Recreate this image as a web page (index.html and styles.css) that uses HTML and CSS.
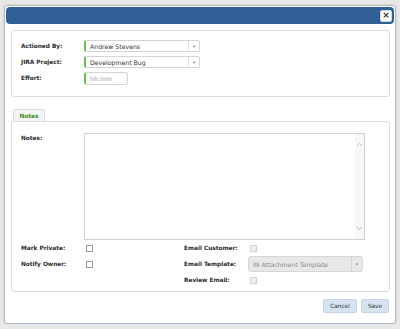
FILE: index.html
```html
<!DOCTYPE html>
<html lang="en">
<head>
    <meta charset="UTF-8">
    <meta name="viewport" content="width=device-width, initial-scale=1.0">
    <title>Action</title>
    <link rel="stylesheet" href="styles.css">
</head>
<body>
    <div class="dialog">
        <div class="titlebar">
            <button class="close">&times;</button>
        </div>

        <div class="panel top-panel">
            <div class="field-row">
                <label>Actioned By:</label>
                <div class="select required">
                    <span class="value">Andrew Stevens</span>
                    <span class="arrow">&#9662;</span>
                </div>
            </div>
            <div class="field-row">
                <label>JIRA Project:</label>
                <div class="select required">
                    <span class="value">Development Bug</span>
                    <span class="arrow">&#9662;</span>
                </div>
            </div>
            <div class="field-row">
                <label>Effort:</label>
                <div class="input required effort">
                    <span class="placeholder">hh:mm</span>
                </div>
            </div>
        </div>

        <div class="tabs">
            <div class="tab active">Notes</div>
        </div>
        <div class="panel tab-panel">
            <div class="notes-row">
                <label>Notes:</label>
                <div class="textarea">
                    <div class="text"></div>
                    <div class="scrollbar">
                        <svg width="7" height="5" viewBox="0 0 7 5"><path d="M1 4 L3.5 1.5 L6 4" fill="none" stroke="#bbb" stroke-width="1"/></svg>
                        <svg width="7" height="5" viewBox="0 0 7 5"><path d="M1 1 L3.5 3.5 L6 1" fill="none" stroke="#bbb" stroke-width="1"/></svg>
                    </div>
                </div>
            </div>
            <div class="options">
                <label>Mark Private:</label>
                <div class="cell"><span class="checkbox"></span></div>
                <label>Email Customer:</label>
                <div class="cell"><span class="checkbox disabled"></span></div>

                <label>Notify Owner:</label>
                <div class="cell"><span class="checkbox"></span></div>
                <label>Email Template:</label>
                <div class="cell">
                    <div class="select disabled wide">
                        <span class="value">IN Attachment Template</span>
                        <span class="arrow">&#9662;</span>
                    </div>
                </div>

                <span></span>
                <span></span>
                <label>Review Email:</label>
                <div class="cell"><span class="checkbox disabled"></span></div>
            </div>
        </div>

        <div class="actions">
            <button class="btn cancel">Cancel</button>
            <button class="btn save">Save</button>
        </div>
    </div>
</body>
</html>
```

FILE: styles.css
```css
body {
    margin: 0;
    padding: 0;
    background-color: #e9e9e9;
    font-family: "DejaVu Sans", Verdana, sans-serif;
    font-size: 6.2px;
    color: #333;
}
.dialog {
    margin: 5px 4px 0 4px;
    height: 315px;
    padding: 1px;
    background-color: #fff;
    border: 1px solid #a9b8c6;
    border-radius: 3px;
    box-shadow: 0 0 3px rgba(0, 0, 0, 0.15);
}
.titlebar {
    height: 17px;
    background-color: #2f5f95;
    border-radius: 4px;
    display: flex;
    justify-content: flex-end;
    align-items: center;
    padding-right: 2px;
}
.close {
    width: 12px;
    height: 12px;
    padding: 0;
    border: 1px solid #ccd6e0;
    border-radius: 2px;
    background-color: #fff;
    color: #333;
    font-family: "DejaVu Sans", sans-serif;
    font-weight: bold;
    font-size: 9px;
    line-height: 9px;
}
.panel {
    margin: 0 4px 0 5px;
    border: 1px solid #dcdcdc;
    border-radius: 3px;
    background-color: #fff;
}
.top-panel {
    margin-top: 6px;
    height: 47px;
    padding: 9px 9px 9px 9px;
    display: flex;
    flex-direction: column;
    gap: 4px;
}
label {
    font-weight: bold;
    font-size: 5.8px;
    color: #2a2a2a;
}
.field-row {
    display: flex;
    align-items: center;
    height: 12px;
}
.field-row label {
    width: 63px;
    flex-shrink: 0;
}
.select {
    display: flex;
    align-items: center;
    height: 12px;
    width: 116px;
    box-sizing: border-box;
    border: 1px solid #d4d4d4;
    border-radius: 2px;
    background-color: #fff;
}
.required {
    border-left: 2px solid #6cc04a;
}
.select .value {
    flex: 1;
    padding-left: 4px;
}
.select .arrow {
    width: 10px;
    height: 100%;
    border-left: 1px solid #e2e2e2;
    color: #999;
    font-size: 5px;
    display: flex;
    align-items: center;
    justify-content: center;
}
.input {
    height: 13px;
    box-sizing: border-box;
    border: 1px solid #d4d4d4;
    border-radius: 3px;
    display: flex;
    align-items: center;
    padding-left: 4px;
}
.required.input {
    border-left: 2px solid #6cc04a;
}
.effort {
    width: 44px;
}
.placeholder {
    color: #999;
}
.tabs {
    margin: 12px 0 0 7px;
    display: flex;
}
.tab {
    width: 32px;
    height: 12px;
    box-sizing: border-box;
    border: 1px solid #dcdcdc;
    border-bottom: none;
    border-radius: 2px 2px 0 0;
    background-color: #f4f4f4;
    color: #3c8d1c;
    font-weight: bold;
    font-size: 5.8px;
    display: flex;
    align-items: center;
    justify-content: center;
}
.tab-panel {
    height: 157px;
    padding: 11px 9px 1px 9px;
    border-radius: 0 3px 3px 3px;
}
.notes-row {
    display: flex;
    height: 107px;
}
.notes-row label {
    width: 63px;
    flex-shrink: 0;
    padding-top: 2px;
}
.textarea {
    width: 281px;
    box-sizing: border-box;
    border: 1px solid #d0d0d0;
    display: flex;
}
.textarea .text {
    flex: 1;
}
.scrollbar {
    width: 9px;
    background-color: #f7f7f7;
    display: flex;
    flex-direction: column;
    justify-content: space-between;
    align-items: center;
    padding: 8px 0 8px 0;
}
.options {
    display: grid;
    grid-template-columns: 63px 100px 64px 1fr;
    grid-auto-rows: 16px;
    align-items: center;
}
.cell {
    display: flex;
    align-items: center;
}
.checkbox {
    width: 5px;
    height: 5px;
    margin-left: 2px;
    border: 1px solid #999;
    background-color: #fff;
}
.checkbox.disabled {
    border-color: #d2d2d2;
    background-color: #f0f0f0;
}
.select.disabled {
    background-color: #e8e8e8;
    border-color: #d6d6d6;
    color: #8a8a8a;
    height: 16px;
    border-radius: 3px;
}
.select.wide {
    width: 115px;
}
.select.disabled .arrow {
    border-left-color: #d6d6d6;
}
.actions {
    display: flex;
    justify-content: flex-end;
    gap: 4px;
    padding: 7px 5px 0 0;
}
.btn {
    height: 14px;
    padding: 0;
    border: 1px solid #c4d4e2;
    border-radius: 2px;
    background-color: #d6e4f1;
    color: #333;
    font-family: "DejaVu Sans", sans-serif;
    font-size: 5.8px;
}
.cancel {
    width: 34px;
}
.save {
    width: 28px;
}
```
